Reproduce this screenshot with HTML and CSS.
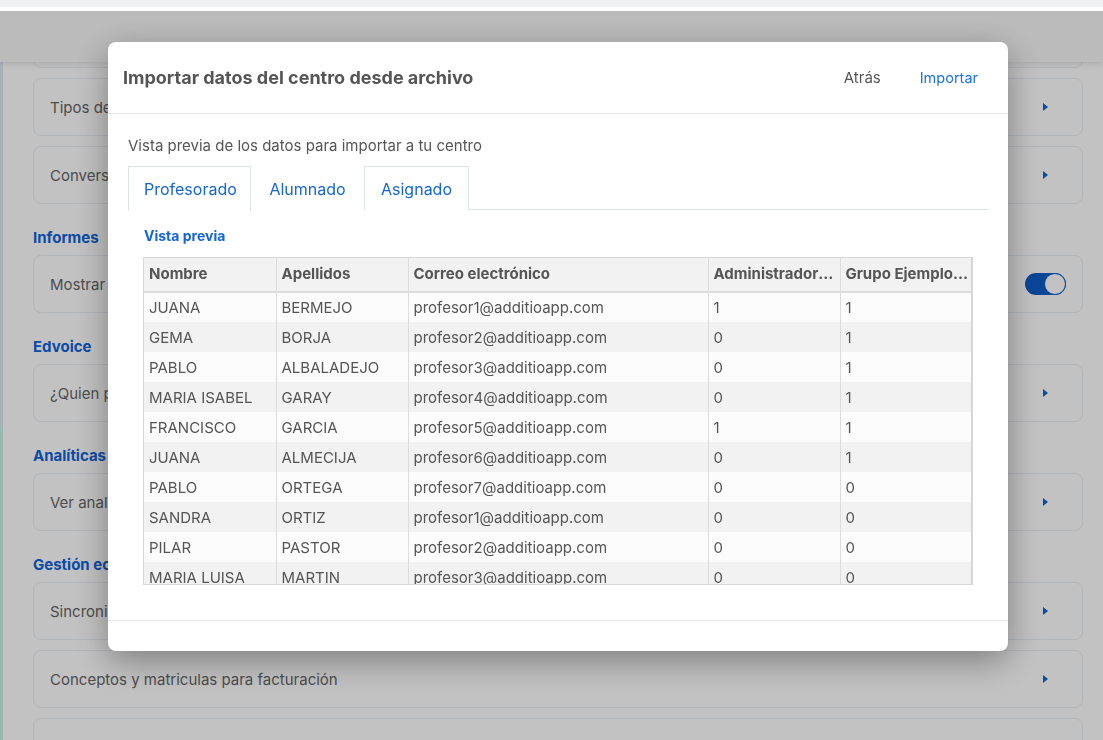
FILE: index.html
```html
<!DOCTYPE html>
<html lang="es">
<head>
    <meta charset="UTF-8">
    <meta name="viewport" content="width=device-width, initial-scale=1.0">
    <title>Importar datos</title>
    <link rel="stylesheet" href="styles.css">
</head>
<body>
<div class="topbar"></div>

<div class="app">
    <div class="app__header"></div>
    <div class="app__side"></div>

    <div class="app__content">
        <div class="card card--stub"></div>
        <div class="card"><span>Tipos de evaluación</span><i class="arrow"></i></div>
        <div class="card"><span>Conversaciones</span><i class="arrow"></i></div>

        <h3 class="section">Informes</h3>
        <div class="card"><span>Mostrar informes a las familias</span><span class="toggle"></span></div>

        <h3 class="section">Edvoice</h3>
        <div class="card"><span>¿Quien puede enviar comunicaciones?</span><i class="arrow"></i></div>

        <h3 class="section">Analíticas</h3>
        <div class="card"><span>Ver analíticas del centro</span><i class="arrow"></i></div>

        <h3 class="section">Gestión económica</h3>
        <div class="card"><span>Sincronizar con el programa de contabilidad</span><i class="arrow"></i></div>
        <div class="card"><span>Conceptos y matriculas para facturación</span><i class="arrow"></i></div>
        <div class="card"><span>Remesas</span><i class="arrow"></i></div>
    </div>
</div>

<div class="overlay"></div>

<div class="modal">
    <div class="modal__header">
        <h2 class="modal__title">Importar datos del centro desde archivo</h2>
        <div class="modal__actions">
            <button class="btn btn--back">Atrás</button>
            <button class="btn btn--primary">Importar</button>
        </div>
    </div>

    <div class="modal__body">
        <p class="modal__intro">Vista previa de los datos para importar a tu centro</p>

        <div class="tabs">
            <button class="tab tab--active">Profesorado</button>
            <button class="tab tab--plain">Alumnado</button>
            <button class="tab">Asignado</button>
        </div>

        <div class="panel">
            <h4 class="panel__title">Vista previa</h4>
            <div class="preview">
                <table class="preview__table">
                    <colgroup>
                        <col style="width:132px">
                        <col style="width:132px">
                        <col style="width:300px">
                        <col style="width:132px">
                        <col style="width:132px">
                    </colgroup>
                    <thead>
                        <tr>
                            <th>Nombre</th>
                            <th>Apellidos</th>
                            <th>Correo electrónico</th>
                            <th>Administrador del centro</th>
                            <th>Grupo Ejemplo 1A</th>
                        </tr>
                    </thead>
                    <tbody>
                        <tr><td>JUANA</td><td>BERMEJO</td><td>profesor1@additioapp.com</td><td>1</td><td>1</td></tr>
                        <tr><td>GEMA</td><td>BORJA</td><td>profesor2@additioapp.com</td><td>0</td><td>1</td></tr>
                        <tr><td>PABLO</td><td>ALBALADEJO</td><td>profesor3@additioapp.com</td><td>0</td><td>1</td></tr>
                        <tr><td>MARIA ISABEL</td><td>GARAY</td><td>profesor4@additioapp.com</td><td>0</td><td>1</td></tr>
                        <tr><td>FRANCISCO</td><td>GARCIA</td><td>profesor5@additioapp.com</td><td>1</td><td>1</td></tr>
                        <tr><td>JUANA</td><td>ALMECIJA</td><td>profesor6@additioapp.com</td><td>0</td><td>1</td></tr>
                        <tr><td>PABLO</td><td>ORTEGA</td><td>profesor7@additioapp.com</td><td>0</td><td>0</td></tr>
                        <tr><td>SANDRA</td><td>ORTIZ</td><td>profesor1@additioapp.com</td><td>0</td><td>0</td></tr>
                        <tr><td>PILAR</td><td>PASTOR</td><td>profesor2@additioapp.com</td><td>0</td><td>0</td></tr>
                        <tr><td>MARIA LUISA</td><td>MARTIN</td><td>profesor3@additioapp.com</td><td>0</td><td>0</td></tr>
                    </tbody>
                </table>
            </div>
        </div>
    </div>

    <div class="modal__footer"></div>
</div>
</body>
</html>
```

FILE: styles.css
```css
html {
    box-sizing: border-box;
}

*,
*::before,
*::after {
    box-sizing: inherit;
}

body {
    margin: 0;
    height: 740px;
    overflow: hidden;
    font-family: Inter, "Noto Sans", sans-serif;
    color: #555;
    background: #fff;
}

button {
    font-family: inherit;
    border: 0;
    background: none;
    padding: 0;
    cursor: pointer;
}

/* page behind the dialog */

.topbar {
    height: 11px;
    background: #eff1f3;
    border-bottom: 4px solid #fff;
}

.app {
    position: relative;
    height: 729px;
    overflow: hidden;
}

.app__header {
    position: relative;
    z-index: 2;
    height: 51px;
    background: #f6f6f6;
    box-shadow: 0 2px 6px rgba(0, 0, 0, 0.12);
}

.app__side {
    position: absolute;
    left: 0;
    top: 51px;
    width: 3px;
    height: 700px;
    background: linear-gradient(to bottom, #dfe8f3 0, #dfe8f3 363px, #ccf0e6 363px);
}

.app__content {
    margin-top: -52px;
    padding: 0 20px 0 33px;
}

.card {
    display: flex;
    align-items: center;
    justify-content: space-between;
    height: 58px;
    margin-bottom: 10px;
    padding: 0 34px 0 16px;
    border: 1px solid #e9eff6;
    border-radius: 8px;
    font-size: 15px;
    color: #666;
}

.section {
    margin: 0 0 6px;
    padding-top: 13px;
    font-size: 15px;
    line-height: 22px;
    font-weight: 700;
    color: #0e63d9;
}

.arrow {
    width: 0;
    height: 0;
    border-top: 4.5px solid transparent;
    border-bottom: 4.5px solid transparent;
    border-left: 5px solid #0e63d9;
}

.toggle {
    position: relative;
    width: 41px;
    height: 22px;
    margin-right: -18px;
    border-radius: 11px;
    background: #0d5cc8;
}

.toggle::after {
    content: "";
    position: absolute;
    right: 0;
    top: 0;
    width: 22px;
    height: 22px;
    border-radius: 50%;
    background: #fff;
    border: 1px solid #0d5cc8;
}

.overlay {
    position: fixed;
    z-index: 10;
    left: 0;
    right: 0;
    top: 11px;
    bottom: 0;
    background: rgba(0, 0, 0, 0.24);
}

/* dialog */

.modal {
    position: fixed;
    z-index: 11;
    left: 108px;
    top: 42px;
    width: 900px;
    height: 609px;
    display: flex;
    flex-direction: column;
    background: #fff;
    border-radius: 8px;
    box-shadow: 0 10px 34px rgba(0, 0, 0, 0.35);
}

.modal__header {
    display: flex;
    align-items: center;
    justify-content: space-between;
    height: 72px;
    padding: 0 30px 0 15px;
    border-bottom: 1px solid #e6e6e6;
}

.modal__title {
    margin: 0;
    font-size: 18px;
    font-weight: 700;
    color: #555;
}

.modal__actions {
    display: flex;
    gap: 39px;
}

.btn {
    font-size: 15px;
}

.btn--back {
    color: #555;
}

.btn--primary {
    font-size: 14.5px;
    color: #1a73e8;
}

.modal__body {
    flex: 1;
    padding: 22px 20px 0;
}

.modal__intro {
    margin: 0 0 10px;
    font-size: 15px;
    line-height: 20px;
    color: #555;
}

.tabs {
    display: flex;
    height: 44px;
    border-bottom: 1px solid #dde4e9;
}

.tab {
    height: 44px;
    padding: 0 16px;
    font-size: 16px;
    color: #1565d8;
    background: #fff;
    border: 1px solid #dde4e9;
    border-bottom: 0;
}

.tab--active {
    height: 45px;
    width: 123px;
    padding-left: 15px;
}

.tab--plain {
    width: 113px;
    border-color: transparent;
}

.panel {
    padding: 15px 0 0 15px;
}

.panel__title {
    margin: 0 0 10px 1px;
    font-size: 14px;
    line-height: 22px;
    font-weight: 700;
    color: #1565d8;
}

.preview {
    width: 830px;
    height: 328px;
    overflow: hidden;
    border: 1px solid #d6d6d6;
    border-right-width: 2px;
}

.preview__table {
    width: 828px;
    table-layout: fixed;
    border-collapse: collapse;
    font-size: 15px;
}

.preview__table th,
.preview__table td {
    padding: 0 6px 0 5px;
    text-align: left;
    white-space: nowrap;
    overflow: hidden;
    text-overflow: ellipsis;
    border-left: 1px solid #dcdcdc;
}

.preview__table th:first-child,
.preview__table td:first-child {
    border-left: 0;
}

.preview__table th {
    height: 34px;
    padding: 0 3px 3px 5px;
    font-weight: 700;
    color: #555;
    background: #f2f2f2;
    border-bottom: 2px solid #dcdcdc;
}

.preview__table td {
    height: 30px;
    color: #555;
}

.preview__table tbody tr:nth-child(odd) {
    background: #fcfcfc;
}

.preview__table tbody tr:nth-child(even) {
    background: #f2f2f2;
}

.modal__footer {
    height: 31px;
    border-top: 1px solid #e6e6e6;
}
```
